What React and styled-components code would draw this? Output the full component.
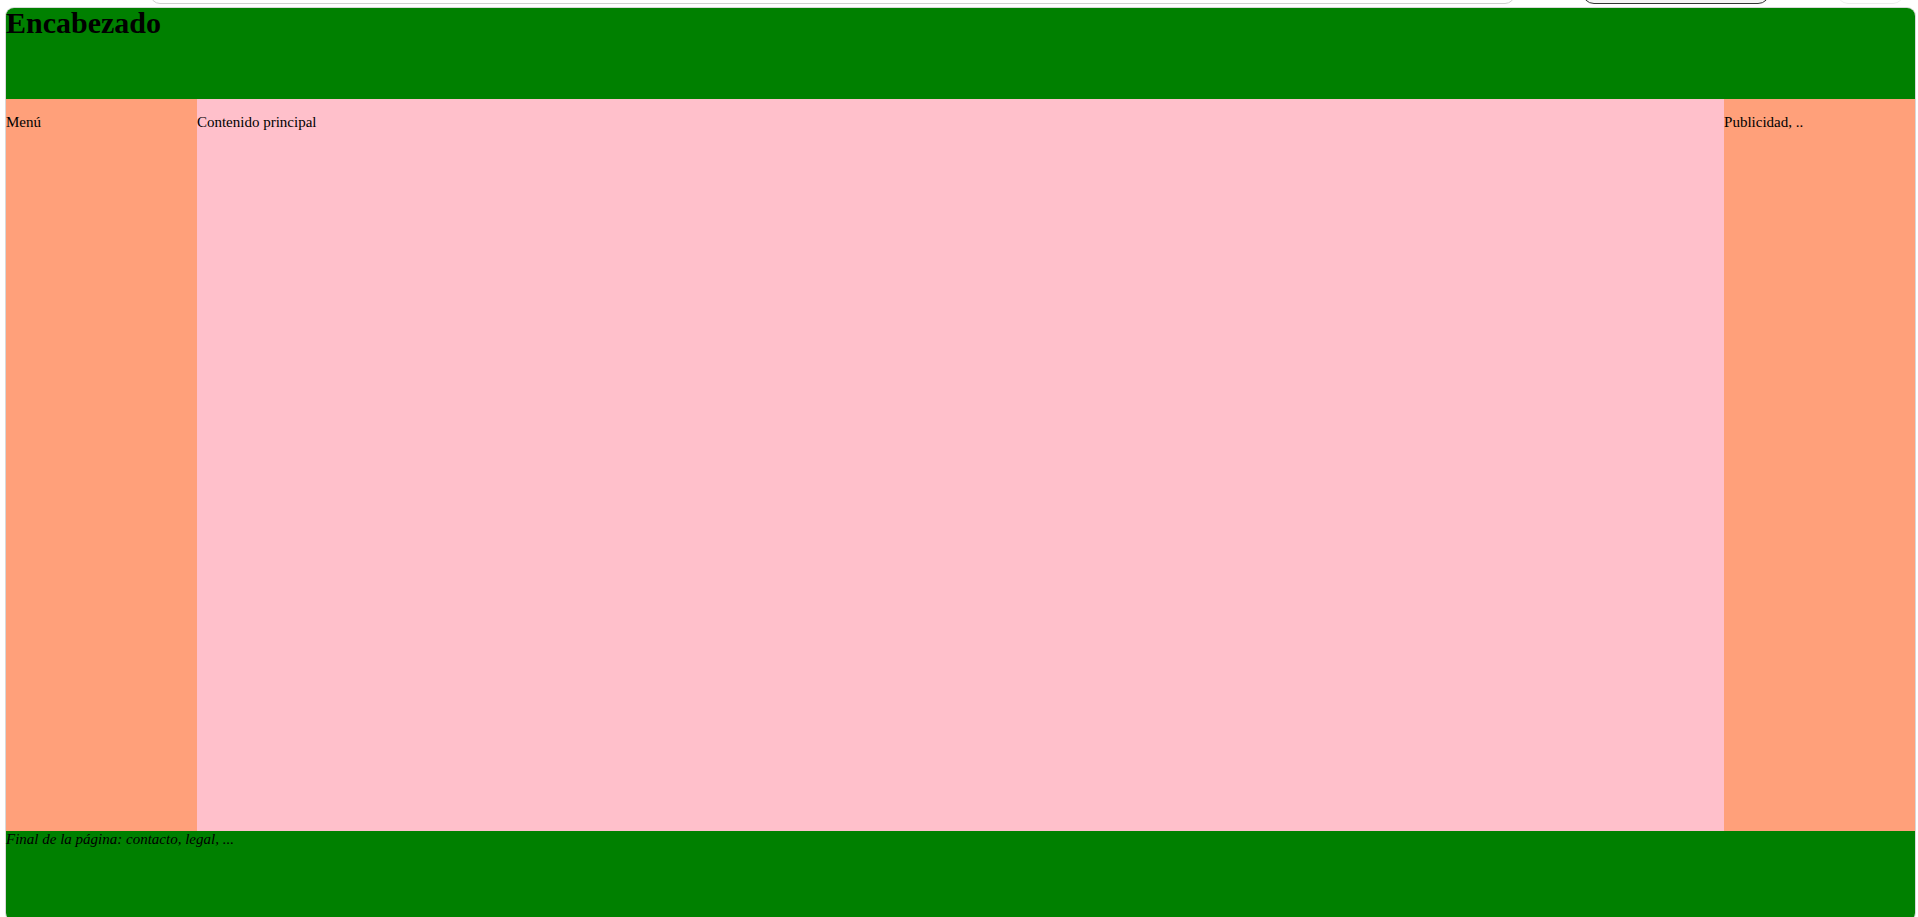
import React from "react";
import styled, { createGlobalStyle } from "styled-components";

const GlobalStyle = createGlobalStyle`
  html, body {
    margin: 0;
    padding: 0;
    background: #ffffff;
    font-family: "Liberation Serif", "Times New Roman", serif;
    font-size: 15px;
    color: #000;
  }
`;

const App = () => {
  return (
    <Page>
      <GlobalStyle />
      <TopStrip>
        <SearchEdge />
        <ButtonEdge />
        <LightEdge />
      </TopStrip>
      <Panel>
        <Header>
          <Title>Encabezado</Title>
        </Header>
        <Side>
          <Text>Menú</Text>
        </Side>
        <Main>
          <Text>Contenido principal</Text>
        </Main>
        <Side>
          <Text>Publicidad, ..</Text>
        </Side>
        <Footer>
          <FootText>Final de la página: contacto, legal, ...</FootText>
        </Footer>
      </Panel>
    </Page>
  );
};

export default App;

const Page = styled.div`
  display: flex;
  flex-direction: column;
  padding-bottom: 4px;
`;

const TopStrip = styled.div`
  display: flex;
  align-items: flex-end;
  height: 4px;
  overflow: hidden;
  padding-left: 150px;
`;

const SearchEdge = styled.div`
  width: 1365px;
  height: 30px;
  border: 1px solid #d0d0d0;
  border-radius: 0 0 10px 10px;
  box-sizing: border-box;
`;

const ButtonEdge = styled.div`
  width: 188px;
  height: 30px;
  margin-left: 67px;
  border: 1px solid #333;
  border-radius: 0 0 12px 12px;
  background: #f4f4f4;
  box-sizing: border-box;
`;

const LightEdge = styled.div`
  width: 65px;
  height: 30px;
  margin-left: 68px;
  border-bottom: 1px solid #ececec;
  border-radius: 0 0 10px 10px;
`;

const Panel = styled.div`
  margin: 4px 3px 0 6px;
  display: grid;
  grid-template-columns: 10% 80% 10%;
  grid-template-rows: 91px 732px 90px;
  border-radius: 8px;
  box-shadow: 0 0 0 1px #d8d8d8;
`;

const Header = styled.header`
  grid-column: 1 / -1;
  background: #008000;
  border-radius: 8px 8px 0 0;
`;

const Title = styled.h1`
  margin: -2px 0 0;
  font-size: 30px;
  font-weight: bold;
`;

const Side = styled.aside`
  background: #ffa07a;
`;

const Main = styled.main`
  background: #ffc0cb;
`;

const Text = styled.p`
  margin: 15px 0;
`;

const Footer = styled.footer`
  grid-column: 1 / -1;
  background: #008000;
  border-radius: 0 0 8px 8px;
`;

const FootText = styled.p`
  margin: 0;
  font-style: italic;
`;
